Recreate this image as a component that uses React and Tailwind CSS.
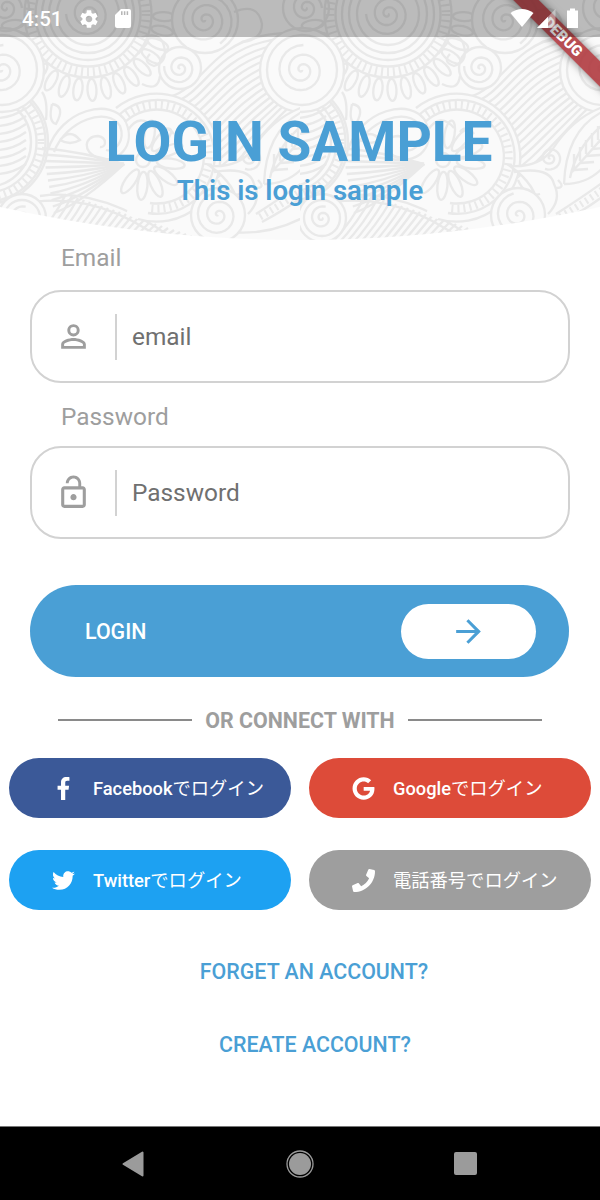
import { MdPersonOutline, MdLockOpen, MdArrowForward, MdSettings } from 'react-icons/md';
import { FaGoogle, FaTwitter, FaPhone } from 'react-icons/fa';

function FacebookF({ className }) {
  return (
    <svg className={className} viewBox="0 0 264 512" fill="currentColor">
      <path d="M76.7 512V283H0v-91h76.7v-71.7C76.7 42.4 124.3 0 193.8 0c33.3 0 61.9 2.5 70.2 3.6V85h-48.2c-37.8 0-45.1 18-45.1 44.3V192H256l-11.7 91h-73.6v229" />
    </svg>
  );
}

const socials = [
  { id: 'facebook', latin: 'Facebook', kana: 'でログイン', Icon: FacebookF, color: 'bg-[#3b5998]' },
  { id: 'google', latin: 'Google', kana: 'でログイン', Icon: FaGoogle, color: 'bg-[#dd4b39]' },
  { id: 'twitter', latin: 'Twitter', kana: 'でログイン', Icon: FaTwitter, color: 'bg-[#1da1f2]' },
  { id: 'phone', latin: '', kana: '電話番号でログイン', Icon: FaPhone, color: 'bg-[#9e9e9e]' },
];

// Spiral polyline, r is the outer radius
const spiral = (cx, cy, r, turns, start = 0) => {
  const steps = Math.round(turns * 24);
  let d = '';
  for (let i = 0; i <= steps; i++) {
    const t = i / steps;
    const a = start + t * turns * Math.PI * 2;
    const x = cx + Math.cos(a) * r * t;
    const y = cy + Math.sin(a) * r * t;
    d += `${i ? 'L' : 'M'}${x.toFixed(1)} ${y.toFixed(1)}`;
  }
  return d;
};

// Ring with small ticks between two radii
function Beads({ cx, cy, r, w }) {
  return (
    <g>
      <circle cx={cx} cy={cy} r={r - w / 2} />
      <circle cx={cx} cy={cy} r={r + w / 2} />
      <circle cx={cx} cy={cy} r={r} strokeWidth={w - 2} strokeDasharray="2 4" />
    </g>
  );
}

function Petals({ cx, cy, r, count, from, to, len, w }) {
  return Array.from({ length: count }, (_, i) => {
    const a = from + ((to - from) * i) / (count - 1);
    return <ellipse key={i} cx={cx + r} cy={cy} rx={len} ry={w} transform={`rotate(${a} ${cx} ${cy})`} />;
  });
}

function Tile() {
  return (
    <g fill="none" stroke="#e9e9e9" strokeWidth="2.3" strokeLinecap="butt">
      {/* waves */}
      {Array.from({ length: 15 }, (_, i) => (
        <path key={i} d={`M${172 + i * 3} ${96 + i * 6} C${200 + i * 3} ${88 + i * 5} ${212 + i * 2} ${46 + i * 8} ${262 + i} ${36 + i * 6} S${286 + i} ${44 + i * 5} 312 ${58 + i * 5}`} />
      ))}
      {/* fern lines along the bottom */}
      {Array.from({ length: 24 }, (_, i) => (
        <path key={i} d={`M${30 + i * 7} 245 Q${52 + i * 6} ${222 + i} ${66 + i * 6} ${194 + i * 2}`} />
      ))}
      <path d="M40 196 Q110 186 190 252 M34 202 Q108 192 180 254" />

      {/* left medallion */}
      <circle cx="-14" cy="142" r="62" fill="#fafafa" />
      <Beads cx={-14} cy={142} r={55} w={9} />
      <circle cx="-14" cy="142" r="45" />
      {Array.from({ length: 9 }, (_, i) => (
        <path key={i} d={`M-4 ${110 + i * 8} Q12 ${110 + i * 8} 26 ${100 + i * 8}`} />
      ))}

      {/* upper mandala */}
      <circle cx="88" cy="14" r="82" fill="#fafafa" stroke="none" />
      <Petals cx={88} cy={14} r={76} count={17} from={2} to={172} len={11} w={4.5} />
      <Beads cx={88} cy={14} r={58} w={11} />
      <circle cx="88" cy="14" r="46" />
      <circle cx="88" cy="14" r="39" />
      <circle cx="88" cy="14" r="31" />
      <path d={spiral(88, 14, 22, 2.5)} />

      {/* paisley and its rays */}
      <path fill="#fafafa" d="M48 150 C60 110 112 96 126 122 C136 146 118 164 98 158 C82 152 84 136 98 136 C108 138 106 148 100 147" />
      <path d="M54 152 C66 120 108 106 120 126 C126 142 114 152 106 150 M60 140 Q70 128 80 140 Q70 146 60 140" />
      {Array.from({ length: 11 }, (_, i) => (
        <path key={i} d={`M124 164 Q84 ${152 + i * 5} ${42 + i * 1.2} ${148 + i * 6.5}`} />
      ))}

      {/* middle mandala */}
      <path fill="#fafafa" stroke="none" d="M120 106 A64 64 0 1 1 126 214 L145 164 Z" />
      <path d="M116 108 A64 64 0 1 1 138 219 M120 114 A57 57 0 1 1 148 213 M125 122 A47 47 0 1 1 150 203" />
      <path d="M122 118 A52 52 0 1 1 148 208" strokeWidth="8" strokeDasharray="2 4" />
      <Petals cx={145} cy={160} r={26} count={8} from={-80} to={125} len={14} w={5} />
      <circle cx="143" cy="160" r="7" />
      <path d="M128 130 Q140 112 154 128 M160 132 Q166 124 174 134" />

      {/* scrolls */}
      <circle cx="205" cy="20" r="33" fill="#fafafa" />
      <path d={spiral(205, 20, 28, 3, 1)} />
      <circle cx="180" cy="68" r="21" fill="#fafafa" />
      <path d={spiral(180, 68, 16, 2.2, 2)} />
      <path d="M140 38 Q160 30 164 46 Q168 62 154 66 Q142 62 150 54 M142 84 Q158 92 160 76 M148 42 L138 54 M234 12 Q258 2 262 24 Q262 40 242 42" />
      {[0, 300].map((x) => (
        <g key={x}>
          <circle cx={x + 2} cy="70" r="42" fill="#fafafa" />
          <circle cx={x + 2} cy="70" r="35" />
          <path d={spiral(x + 2, 70, 25, 2.6, 1)} />
          <circle cx={x + 6} cy="8" r="23" />
          <path d={spiral(x + 6, 8, 16, 2)} />
        </g>
      ))}

      {/* right leaf */}
      <path fill="#fafafa" d="M210 166 Q238 168 252 150 Q274 116 306 106 V216 Q270 236 230 232 Q252 196 210 166 Z" />
      <path d="M264 184 Q266 128 306 110 M264 184 Q290 184 306 164 M270 178 Q276 146 306 122 M272 172 L304 136" />
      {Array.from({ length: 5 }, (_, i) => (
        <path key={i} d={`M${274 + i * 6} ${168 - i * 7} l0 -14 M${274 + i * 6} ${170 - i * 7} l14 -1`} />
      ))}
      <path d={spiral(250, 158, 12, 2, 2)} />
      <path d="M214 172 Q250 166 254 184 Q262 200 248 214 M218 180 Q226 198 240 194 M258 180 q8 8 -2 8" />
      <path d="M256 214 Q284 196 306 180 M262 222 Q288 208 306 194" />
      <path d="M260 217 Q286 202 306 187" strokeWidth="7" strokeDasharray="2 4" />

      <circle cx="218" cy="215" r="27" fill="#fafafa" />
      <path d={spiral(218, 215, 22, 2.4, 2)} />
      <circle cx="22" cy="218" r="24" fill="#fafafa" />
      <circle cx="22" cy="218" r="18" />
      <path d={spiral(22, 218, 12, 1.8)} />
      <path d="M52 104 Q66 106 56 124 Q48 122 52 104 M42 92 Q48 100 46 120" />
    </g>
  );
}

function HeaderBackground() {
  return (
    <svg className="absolute inset-0" width="600" height="240" viewBox="0 0 600 240" aria-hidden="true">
      <defs>
        <filter id="soften" x="0" y="0" width="100%" height="100%">
          <feGaussianBlur stdDeviation="0.7" />
        </filter>
        <pattern id="doodle" width="300" height="260" patternUnits="userSpaceOnUse">
          <rect width="300" height="260" fill="#fafafa" />
          <Tile />
        </pattern>
        <clipPath id="curve">
          <path d="M0 0H600V207Q450 240 300 240Q150 240 0 207Z" />
        </clipPath>
      </defs>
      <g clipPath="url(#curve)">
        <rect x="-10" y="-10" width="620" height="260" fill="url(#doodle)" filter="url(#soften)" />
      </g>
    </svg>
  );
}

function StatusBar() {
  return (
    <div className="relative z-20 flex h-[37px] items-center justify-between bg-black/25 pr-[21px] pl-[22px] text-left text-white">
      <div className="flex items-center">
        <span className="w-[56px] pt-px text-[20.6px] leading-none font-medium">4:51</span>
        <MdSettings className="size-[22px]" />
        <svg className="ml-[15px]" width="16" height="20" viewBox="0 0 16 20">
          <path d="M6 0H14Q16 0 16 2V17Q16 19 14 19H2Q0 19 0 17V6Z" fill="currentColor" />
          <path d="M6.8 2.2V6M9.6 2.2V6M12.4 2.2V6" stroke="#b5b5b5" strokeWidth="1.5" />
        </svg>
      </div>
      <svg width="69" height="22" viewBox="0 0 69 22" fill="#fff">
        <path d="M0.5 5Q12 -3 23.5 5L12 19Z" />
        <path d="M45.5 1V20H27Z" opacity="0.4" />
        <path d="M38 8.7V20H27Z" />
        <path d="M60 0.5H65V2.5H68V20H57V2.5H60Z" />
      </svg>
    </div>
  );
}

function DebugBanner() {
  return (
    <div className="pointer-events-none absolute top-0 right-0 z-10 size-[110px] overflow-hidden">
      <div className="absolute top-[28px] left-[-17px] flex h-[18px] w-[180px] rotate-45 items-center justify-center bg-[#b03a3f]/90 text-[15px] leading-none font-black text-white shadow-[0_0_9px_rgba(0,0,0,0.5)]">
        DEBUG
      </div>
    </div>
  );
}

function Field({ label, placeholder, Icon, type, gap }) {
  return (
    <label className={`flex flex-col ${gap}`}>
      <span className="ml-[61px] h-[29px] text-[24.4px] leading-[29px] text-[#9e9e9e]">{label}</span>
      <span className="mx-[30px] flex h-[93px] items-center rounded-[31px] border-2 border-[#d2d2d2] pl-[23px]">
        <Icon className="size-[37px] text-[#9e9e9e]" />
        <span className="ml-[23px] h-[46px] w-[2px] bg-[#d2d2d2]" />
        <input
          type={type}
          placeholder={placeholder}
          className="ml-[15px] w-[400px] pt-[2px] text-[24.4px] outline-none placeholder:text-[#707070]"
        />
      </span>
    </label>
  );
}

function SocialButton({ latin, kana, Icon, color }) {
  return (
    <button className={`flex h-[60px] items-center rounded-full pl-[42px] text-white ${color}`}>
      <span className="flex w-[24px] justify-center">
        <Icon className="size-[23px]" />
      </span>
      <span className="ml-[18px] text-[18.3px] leading-none font-medium whitespace-nowrap">
        {latin}
        <span className="font-['Noto_Sans_CJK_JP',sans-serif] font-normal">{kana}</span>
      </span>
    </button>
  );
}

function NavBar() {
  return (
    <nav className="mt-auto flex h-[74px] items-center justify-between border-t border-[#777] bg-black pr-[123px] pl-[122px]">
      <svg width="22" height="26" viewBox="0 0 22 26">
        <path d="M20.5 1.5V24.5L1.5 13Z" fill="#9b9b9b" stroke="#9b9b9b" strokeWidth="2" strokeLinejoin="round" />
      </svg>
      <svg className="ml-[2px]" width="28" height="28" viewBox="0 0 28 28">
        <circle cx="14" cy="14" r="13" fill="none" stroke="#9b9b9b" strokeWidth="1.3" />
        <circle cx="14" cy="14" r="11" fill="#9b9b9b" />
      </svg>
      <span className="size-[23px] rounded-[2px] bg-[#9b9b9b]" />
    </nav>
  );
}

export default function App() {
  return (
    <div className="relative flex h-[1200px] w-[600px] flex-col overflow-hidden bg-white font-[Roboto,'Noto_Sans_CJK_JP',sans-serif]">
      <header className="relative h-[240px] text-center text-[#4a9fd5]">
        <HeaderBackground />
        <StatusBar />
        <h1 className="relative mt-[73px] pr-[2px] text-[55px] leading-[64px] font-bold">LOGIN SAMPLE</h1>
        <p className="relative pt-px text-[27.5px] leading-[32px] font-semibold">This is login sample</p>
      </header>
      <DebugBanner />

      <form className="flex flex-col pt-[3px]">
        <div className="flex flex-col gap-[19px]">
          <Field label="Email" placeholder="email" Icon={MdPersonOutline} type="text" gap="gap-[18px]" />
          <Field label="Password" placeholder="Password" Icon={MdLockOpen} type="password" gap="gap-[15px]" />
        </div>

        <button
          type="button"
          className="mt-[46px] ml-[30px] flex h-[92px] w-[539px] items-center justify-between rounded-full bg-[#4a9fd5] pr-[33px] pl-[55px] text-white"
        >
          <span className="pt-[2px] text-[21.4px] font-medium">LOGIN</span>
          <span className="flex h-[55px] w-[135px] items-center justify-center rounded-full bg-white text-[#4a9fd5]">
            <MdArrowForward className="size-[37px]" />
          </span>
        </button>
      </form>

      <div className="mx-[58px] mt-[29px] flex h-[28px] items-center justify-between">
        <span className="h-[1.5px] w-[134px] bg-[#8a8a8a]" />
        <span className="pt-[2px] text-[21.4px] font-bold text-[#9e9e9e]">OR CONNECT WITH</span>
        <span className="h-[1.5px] w-[134px] bg-[#8a8a8a]" />
      </div>

      <div className="mx-[9px] mt-[24px] grid grid-cols-2 gap-x-[18px] gap-y-[32px]">
        {socials.map((s) => (
          <SocialButton key={s.id} {...s} />
        ))}
      </div>

      <div className="mt-[48px] flex flex-col gap-[45px] text-center text-[21.4px] leading-[28px] font-medium text-[#4a9fd5]">
        <a className="ml-[28px]">FORGET AN ACCOUNT?</a>
        <a className="ml-[30px]">CREATE ACCOUNT?</a>
      </div>

      <NavBar />
    </div>
  );
}
